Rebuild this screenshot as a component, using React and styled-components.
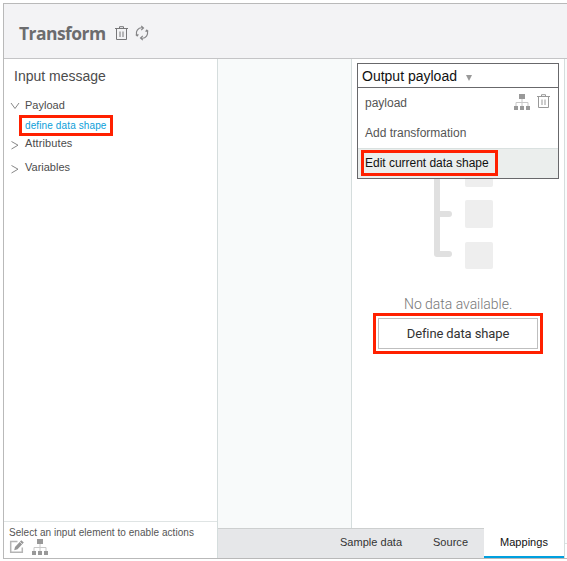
import React from 'react';
import styled, { createGlobalStyle } from 'styled-components';

const GlobalStyle = createGlobalStyle`
  * { box-sizing: border-box; }
  body {
    margin: 0;
    background: #fff;
    font-family: "Liberation Sans", Arial, sans-serif;
    color: #555;
    overflow: hidden;
  }
`;

const Page = styled.div`
  width: 567px;
  height: 561px;
  padding: 3px 0 2px 3px;
`;

const Frame = styled.div`
  height: 556px;
  display: flex;
  flex-direction: column;
  border: 1px solid #b9b9b9;
  border-right: 0;
`;

const Header = styled.header`
  flex: 0 0 55px;
  display: flex;
  align-items: center;
  padding: 4px 0 0 15px;
  background: #f3f3f5;
  border-bottom: 1px solid #c4c4c6;
`;

const Title = styled.h1`
  margin: 0;
  width: 96px;
  font: 700 17.5px/24px "Open Sans", sans-serif;
  letter-spacing: -0.55px;
  color: #6c6c6e;
  white-space: nowrap;
`;

const Body = styled.div`
  flex: 1;
  min-height: 0;
  display: flex;
`;

const InputPanel = styled.section`
  flex: 0 0 214px;
  display: flex;
  flex-direction: column;
  border-right: 1px solid #d5dddd;
`;

const PanelTitle = styled.h2`
  margin: 0;
  padding: 8px 0 0 10px;
  height: 35px;
  font-size: 14px;
  line-height: 18px;
  font-weight: 400;
  letter-spacing: 0;
  color: #4c4c4c;
  white-space: nowrap;
`;

const TreeItem = styled.div`
  display: flex;
  align-items: center;
  height: ${p => p.$height}px;
  padding-left: 6px;
  gap: 5px;
  font-size: 11px;
  line-height: 14px;
  letter-spacing: ${p => p.$spacing || 0}px;
  color: #4c4c4c;
  & svg { margin-top: 3px; }
`;

const ShapeLink = styled.a`
  display: block;
  width: 94px;
  height: 21px;
  margin-left: 15px;
  padding-left: 3px;
  border: 3px solid #ff2000;
  font-size: 10px;
  line-height: 15px;
  letter-spacing: 0.12px;
  color: #0b9ed9;
  white-space: nowrap;
`;

const PanelFooter = styled.footer`
  margin-top: auto;
  height: 37px;
  padding: 4px 0 0 5px;
  border-top: 1px solid #dfe4e4;
  font-size: 10px;
  line-height: 14px;
  letter-spacing: 0.05px;
  white-space: nowrap;
`;

const FooterIcons = styled.div`
  display: flex;
  gap: 7px;
  margin-top: -1px;
  & svg { display: block; }
`;

const Workspace = styled.main`
  flex: 1;
  display: flex;
  flex-direction: column;
`;

const Columns = styled.div`
  flex: 1;
  display: flex;
  min-height: 0;
`;

const Canvas = styled.div`
  flex: 0 0 134px;
  background: #f8fafa;
  border-right: 1px solid #d5dddd;
`;

const OutputPanel = styled.section`
  position: relative;
  flex: 0 0 213px;
  display: flex;
  flex-direction: column;
  align-items: flex-start;
  padding-top: 100px;
  border-right: 1px solid #d5dddd;
`;

const EmptyText = styled.p`
  margin: 26px 0 0 52px;
  height: 17px;
  font: 300 14px/17px Roboto, sans-serif;
  letter-spacing: -0.03px;
  color: #777;
  white-space: nowrap;
`;

const ButtonHighlight = styled.div`
  width: 170px;
  height: 41px;
  margin-left: 21px;
  border: 3px solid #ff2000;
  padding: 2px;
`;

const DefineButton = styled.button`
  display: block;
  width: 160px;
  height: 31px;
  padding: 0;
  background: #fff;
  border: 1px solid #bfbfbf;
  font: 400 13px/28px Roboto, sans-serif;
  letter-spacing: -0.12px;
  color: #333;
`;

const Menu = styled.div`
  position: absolute;
  left: 5px;
  top: 4px;
  width: 202px;
  height: 116px;
  background: #fff;
  border: 1px solid #68686b;
`;

const MenuHead = styled.div`
  display: flex;
  align-items: center;
  height: 24px;
  padding-left: 4px;
  gap: 9px;
  border-bottom: 1px solid #68686b;
  color: #111;
  font-size: 14px;
  & svg { margin-top: 4px; }
`;

const MenuRow = styled.div`
  display: flex;
  align-items: center;
  height: 30px;
  padding-left: 7px;
  font-size: 12px;
  letter-spacing: ${p => p.$spacing || 0}px;
`;

const RowIcons = styled.span`
  display: flex;
  gap: 7px;
  margin: -3px 0 0 auto;
  padding-right: 8px;
`;

const SelectedRow = styled.div`
  height: 30px;
  padding: 2px 0 0 3px;
  background: #ebeeed;
  border-top: 1px solid #dae1e0;
`;

const SelectedLabel = styled.div`
  width: 137px;
  height: 26px;
  margin-top: -1px;
  padding-left: 1px;
  border: 3px solid #ff2000;
  color: #111;
  font-size: 12px;
  line-height: 20px;
  letter-spacing: -0.02px;
  white-space: nowrap;
`;

const SideStrip = styled.div`
  flex: 1;
  background: #fafcfc;
`;

const TabBar = styled.nav`
  flex: 0 0 30px;
  display: flex;
  height: 30px;
`;

const Tabs = styled.div`
  flex: 0 0 346px;
  display: flex;
`;

const Tab = styled.div`
  width: ${p => p.$width}px;
  padding-left: ${p => p.$pad}px;
  font-size: 11px;
  line-height: 26px;
  letter-spacing: 0.03px;
  color: ${p => (p.$active ? '#111' : '#333')};
  background: ${p => (p.$active ? '#fff' : '#e6e7e9')};
  border-top: 1px solid ${p => (p.$active ? '#fff' : '#cdcfcf')};
  border-bottom: ${p => (p.$active ? '2px solid #00a0df' : '0')};
`;

const TabRest = styled.div`
  flex: 1;
  border-left: 1px solid #d5dddd;
  background: linear-gradient(#fafcfc 15px, #dce2e2 15px, #dce2e2 16px, #fff 16px);
`;

function TrashIcon({ color }) {
  return (
    <svg width="13" height="15" viewBox="0 0 13 15" fill="none" stroke={color}>
      <path d="M0 2.5H13M4.5 2.5V.7H8.5V2.5M1.5 2.5V13.5H11.5V2.5M5 5.5V11M8 5.5V11" />
    </svg>
  );
}

const RefreshSvg = styled.svg`
  margin-left: 7px;
`;

function RefreshIcon() {
  return (
    <RefreshSvg width="14" height="16" viewBox="0 0 14 16" fill="none" stroke="#858587" strokeWidth="1.15">
      <path d="M2.2 10.6A5.2 5.2 0 0 1 7.8 2.9M6.2 .8L8.5 3L6.2 5.2M11.8 5.4A5.2 5.2 0 0 1 6.2 13.1M7.8 10.8L5.5 13L7.8 15.2M.8 9.5L2.2 10.8L3.4 9.3M10.6 6.7L11.8 5.2L13.2 6.5" />
    </RefreshSvg>
  );
}

function ShapeIcon() {
  return (
    <svg width="16" height="16" viewBox="0 0 16 16">
      <path d="M8 5V12M2 12V8.5H14V12" fill="none" stroke="#c8c8c8" />
      <path d="M5 0H11V5H5ZM0 12H4V16H0ZM6 12H10V16H6ZM12 12H16V16H12Z" fill="#999" />
    </svg>
  );
}

function EditIcon() {
  return (
    <svg width="16" height="16" viewBox="0 0 16 16">
      <path d="M8.5 2.5H1.7V13.3H13.3V8.5" fill="none" stroke="#b5b5b5" strokeWidth="1.5" />
      <path d="M5.2 11.2L6 8L12.3 1.2L14.8 3.5L8.5 10.3Z" fill="#969696" />
      <path d="M10.7 2.8L13.3 5.2" stroke="#fff" strokeWidth=".7" />
    </svg>
  );
}

function Chevron({ open }) {
  return (
    <svg width="10" height="10" viewBox="0 0 10 10" fill="none" stroke="#888">
      <path d={open ? 'M1 2L5 7.5L9 2' : 'M1.5 1.5L8 5.2L1.5 9'} />
    </svg>
  );
}

const TreeDrawing = styled.svg`
  display: block;
  flex: none;
  margin-left: 82px;
`;

function EmptyTree() {
  return (
    <TreeDrawing width="60" height="111" viewBox="0 0 60 111">
      <path d="M3 0V95H15M3 55H15" fill="none" stroke="#e0e0e0" strokeWidth="6" strokeLinecap="round" strokeLinejoin="round" />
      <g fill="#eee">
        <rect x="31" y="0" width="28" height="28" rx="2" />
        <rect x="31" y="41" width="28" height="28" rx="2" />
        <rect x="31" y="83" width="28" height="27" rx="2" />
      </g>
    </TreeDrawing>
  );
}

export default function App() {
  return (
    <Page>
      <GlobalStyle />
      <Frame>
        <Header>
          <Title>Transform</Title>
          <TrashIcon color="#777779" />
          <RefreshIcon />
        </Header>
        <Body>
          <InputPanel>
            <PanelTitle>Input message</PanelTitle>
            <TreeItem $height={21}><Chevron open />Payload</TreeItem>
            <ShapeLink>define data shape</ShapeLink>
            <TreeItem $height={14} $spacing={0.1}><Chevron />Attributes</TreeItem>
            <TreeItem $height={34}><Chevron />Variables</TreeItem>
            <PanelFooter>
              Select an input element to enable actions
              <FooterIcons><EditIcon /><ShapeIcon /></FooterIcons>
            </PanelFooter>
          </InputPanel>
          <Workspace>
            <Columns>
              <Canvas />
              <OutputPanel>
                <EmptyTree />
                <EmptyText>No data available.</EmptyText>
                <ButtonHighlight>
                  <DefineButton>Define data shape</DefineButton>
                </ButtonHighlight>
                <Menu>
                  <MenuHead>
                    Output payload
                    <svg width="6" height="6" viewBox="0 0 6 6"><path d="M0 0H6L3 6Z" fill="#999" /></svg>
                  </MenuHead>
                  <MenuRow>
                    payload
                    <RowIcons><ShapeIcon /><TrashIcon color="#999" /></RowIcons>
                  </MenuRow>
                  <MenuRow>Add transformation</MenuRow>
                  <SelectedRow>
                    <SelectedLabel>Edit current data shape</SelectedLabel>
                  </SelectedRow>
                </Menu>
              </OutputPanel>
              <SideStrip />
            </Columns>
            <TabBar>
              <Tabs>
                <Tab $width={215} $pad={122}>Sample data</Tab>
                <Tab $width={51} $pad={0}>Source</Tab>
                <Tab $width={80} $pad={16} $active>Mappings</Tab>
              </Tabs>
              <TabRest />
            </TabBar>
          </Workspace>
        </Body>
      </Frame>
    </Page>
  );
}
